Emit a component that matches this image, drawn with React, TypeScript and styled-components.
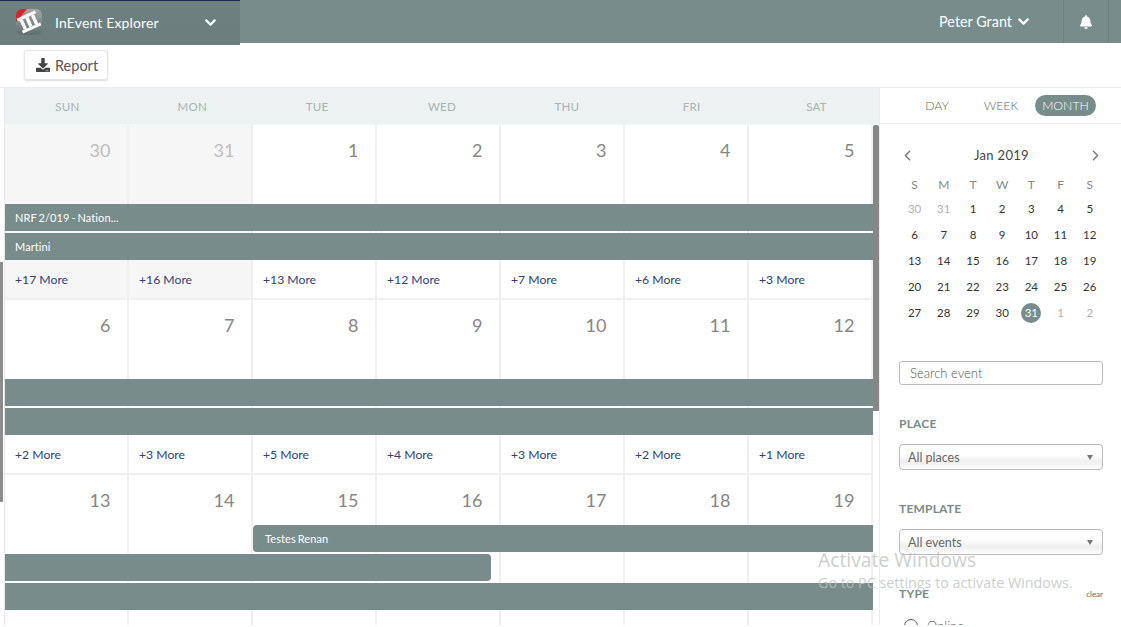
import React from 'react'
import styled, { createGlobalStyle } from 'styled-components'
import { ChevronDown, ChevronLeft, ChevronRight } from 'lucide-react'
import { FaBell, FaDownload } from 'react-icons/fa'

const SLATE = '#788c8c'

const GlobalStyle = createGlobalStyle`
  html, body {
    margin: 0;
    height: 100%;
    background: #fff;
    overflow: hidden;
  }
  * {
    box-sizing: border-box;
  }
  body {
    font-family: "Lato", "Liberation Sans", sans-serif;
  }
`

const Page = styled.div`
  position: relative;
  width: 1121px;
  height: 625px;
  overflow: hidden;
  background: #fff;
  display: flex;
  flex-direction: column;
`

const TopBar = styled.header`
  flex: none;
  height: 43px;
  background: ${SLATE};
  display: flex;
  align-items: flex-start;
  color: #fff;
  position: relative;
  z-index: 2;
`

const Brand = styled.div`
  width: 240px;
  height: 45px;
  background: linear-gradient(#6e8080, #6b7d7d);
  border-top: 1px solid #1c2c48;
  display: flex;
  align-items: center;
  padding: 0 0 2px 15px;
  font-size: 14px;
  letter-spacing: 0.15px;
`

const BrandName = styled.span`
  margin-left: 12px;
  flex: 1;
`

const BrandChevron = styled.span`
  display: flex;
  margin-right: 21px;
`

const UserArea = styled.div`
  margin-left: auto;
  height: 43px;
  display: flex;
  align-items: center;
  font-size: 14.4px;
`

const UserName = styled.span`
  display: flex;
  align-items: center;
  gap: 3px;
  margin-right: 31px;
`

const BellBox = styled.span`
  width: 46px;
  height: 43px;
  margin-right: 12px;
  display: flex;
  align-items: center;
  justify-content: center;
  border-left: 1px solid #6c8080;
  border-right: 1px solid #6c8080;
`

const Toolbar = styled.div`
  flex: none;
  height: 45px;
  padding: 7px 0 0 24px;
  border-bottom: 1px solid #ececec;
`

const ReportButton = styled.button`
  width: 84px;
  height: 30px;
  padding: 0 0 0 11px;
  background: #fff;
  border: 1px solid #e6e6e6;
  border-radius: 3px;
  box-shadow: 0 1px 2px rgba(0, 0, 0, 0.14);
  display: flex;
  align-items: center;
  gap: 5px;
  font-family: inherit;
  font-size: 14.5px;
  color: #555;
`

const Main = styled.div`
  flex: 1;
  min-height: 0;
  display: flex;
`

const Gutter = styled.div`
  flex: none;
  width: 5px;
  border-right: 1px solid #e6e6e6;
  padding-top: 174px;
`

const GutterThumb = styled.div`
  width: 3px;
  height: 240px;
  background: #8c8c8c;
`

const CalendarColumn = styled.div`
  flex: none;
  width: 874px;
  display: flex;
  flex-direction: column;
`

const WeekHeader = styled.div`
  flex: none;
  height: 37px;
  display: grid;
  grid-template-columns: repeat(7, 1fr);
  background: #ecf2f2;
  border-bottom: 1px solid #f4f6f6;
`

const WeekLabel = styled.div`
  padding-top: 12px;
  text-align: center;
  font-size: 11.5px;
  letter-spacing: 0.3px;
  color: #a8b2b2;
`

const CalendarBody = styled.div`
  flex: 1;
  display: flex;
  min-height: 0;
`

const Calendar = styled.section`
  flex: none;
  width: 868px;
  display: flex;
  flex-direction: column;
`

const Week = styled.div`
  flex: none;
  height: 175px;
  display: grid;
  grid-template-columns: repeat(7, 124px);
  grid-template-rows: 50px 29px 29px 29px 38px;
`

const Cell = styled.div<{ $col: number; $muted?: boolean }>`
  grid-column: ${p => p.$col};
  grid-row: 1 / -1;
  display: flex;
  flex-direction: column;
  background: ${p => (p.$muted ? '#f6f6f6' : '#fff')};
  border-right: 2px solid #f0f0f0;
  border-bottom: 2px solid #f0f0f0;
`

const DateNumber = styled.div<{ $muted?: boolean }>`
  padding: 14px 16.5px 0 0;
  text-align: right;
  font-size: 18px;
  line-height: 22px;
  color: ${p => (p.$muted ? '#bdbdbd' : '#868686')};
`

const MoreLink = styled.a`
  margin-top: auto;
  height: 37px;
  padding: 11px 0 0 10px;
  font-size: 12.2px;
  line-height: 16px;
  color: #2f4070;
`

const EventBar = styled.div<{ $from: number; $to: number; $slot: number; $start?: boolean; $end?: boolean }>`
  grid-column: ${p => p.$from} / ${p => p.$to};
  grid-row: ${p => p.$slot};
  height: 27px;
  margin-right: ${p => (p.$end ? '10px' : '0')};
  padding-left: ${p => (p.$start ? '12px' : '10px')};
  background: ${SLATE};
  border-radius: ${p => (p.$start ? '4px' : '0')} ${p => (p.$end ? '4px' : '0')} ${p => (p.$end ? '4px' : '0')} ${p => (p.$start ? '4px' : '0')};
  color: #fff;
  font-size: 11px;
  letter-spacing: 0.1px;
  word-spacing: -1px;
  line-height: 27px;
  z-index: 1;
`

const ScrollTrack = styled.div`
  flex: none;
  width: 6px;
`

const ScrollThumb = styled.div`
  width: 6px;
  height: 286px;
  border-radius: 2px 2px 0 0;
  background: #868686;
`

const Sidebar = styled.aside`
  flex: 1;
  min-width: 0;
  display: flex;
  flex-direction: column;
  border-left: 1px solid #ececec;
`

const ViewTabs = styled.div`
  flex: none;
  height: 36px;
  padding: 7px 0 0 25px;
  border-bottom: 1px solid #ececec;
  display: flex;
  align-items: flex-start;
`

const ViewTab = styled.span<{ $active?: boolean; $width: number }>`
  width: ${p => p.$width}px;
  height: 21px;
  line-height: 21px;
  text-align: center;
  font-size: 12.3px;
  font-weight: 300;
  border-radius: 11px;
  color: ${p => (p.$active ? '#fff' : '#666')};
  background: ${p => (p.$active ? SLATE : 'transparent')};
  &:last-child {
    margin-left: 2px;
  }
`

const MonthNav = styled.div`
  flex: none;
  margin-top: 21px;
  padding: 0 17px 0 19px;
  height: 20px;
  display: flex;
  align-items: center;
  justify-content: space-between;
  color: #777;
`

const MonthTitle = styled.span`
  font-size: 13px;
  letter-spacing: 0.3px;
  color: #444;
`

const MiniGrid = styled.div`
  flex: none;
  margin: 10px 0 0 20px;
  display: grid;
  grid-template-columns: repeat(7, 29.2px);
  grid-template-rows: 24px;
  grid-auto-rows: 26px;
  width: 205px;
`

const MiniHead = styled.div`
  font-size: 12px;
  line-height: 20px;
  text-align: center;
  color: #888;
`

const MiniDay = styled.div<{ $muted?: boolean; $today?: boolean }>`
  justify-self: center;
  width: 20px;
  height: 20px;
  line-height: 20px;
  text-align: center;
  font-size: 11.5px;
  border-radius: 50%;
  color: ${p => (p.$today ? '#fff' : p.$muted ? '#b0b0b0' : '#333')};
  background: ${p => (p.$today ? SLATE : 'transparent')};
`

const Filters = styled.div`
  flex: none;
  padding: 0 18px 0 19px;
  display: flex;
  flex-direction: column;
`

const SearchInput = styled.input`
  margin-top: 32px;
  width: 204px;
  height: 24px;
  padding: 0 10px;
  border: 1px solid #bbb;
  border-radius: 3px;
  font-family: inherit;
  font-size: 13px;
  font-weight: 300;
  color: #555;
  &::placeholder {
    color: #555;
    opacity: 1;
  }
`

const FieldLabel = styled.div<{ $gap: number }>`
  margin-top: ${p => p.$gap}px;
  height: 14px;
  line-height: 14px;
  font-size: 12px;
  font-weight: 700;
  letter-spacing: 0.2px;
  color: #7c8a8a;
  display: flex;
  justify-content: space-between;
`

const ClearLink = styled.span`
  font-size: 8px;
  font-weight: 400;
  letter-spacing: 0;
  color: #666;
`

const SelectBox = styled.div`
  margin-top: 13px;
  width: 204px;
  height: 26px;
  padding: 0 9px 0 8px;
  border: 1px solid #bbb;
  border-radius: 4px;
  background: linear-gradient(#fff, #fff 40%, #eee 70%, #fff);
  display: flex;
  align-items: center;
  justify-content: space-between;
  font-size: 12.5px;
  color: #666;
`

const SelectArrow = styled.span`
  width: 0;
  height: 0;
  border-left: 3.5px solid transparent;
  border-right: 3.5px solid transparent;
  border-top: 5px solid #777;
`

const RadioRow = styled.div`
  margin-top: 17px;
  padding-left: 5px;
  display: flex;
  align-items: center;
  gap: 9px;
  font-size: 13px;
  font-weight: 300;
  color: #555;
`

const RadioDot = styled.span`
  width: 14px;
  height: 14px;
  border: 1px solid #555;
  border-radius: 50%;
`

const Watermark = styled.div`
  position: absolute;
  left: 818px;
  top: 547px;
  z-index: 3;
  font-family: "Open Sans", "Noto Sans", sans-serif;
  color: rgba(190, 194, 194, 0.8);
  pointer-events: none;
`

const WatermarkTitle = styled.div`
  font-size: 19.3px;
  line-height: 26px;
`

const WatermarkText = styled.div`
  font-size: 14.3px;
  line-height: 20px;
`

const AppLogo = () => (
  <svg width="28" height="28" viewBox="0 0 28 28">
    <defs>
      <linearGradient id="logoBg" x1="0" y1="0" x2="0" y2="1">
        <stop offset="0" stopColor="#a4a8a8" />
        <stop offset="1" stopColor="#5f6e6e" />
      </linearGradient>
    </defs>
    <rect x="1" y="1" width="26" height="26" rx="6" fill="url(#logoBg)" />
    <path d="M7 1 H12 L1 14 V7 A6 6 0 0 1 7 1 Z" fill="#d8232a" />
    <g transform="rotate(-24 14 14)" fill="#fff">
      <rect x="4" y="6" width="20" height="3" />
      <rect x="4" y="19" width="20" height="3" />
      <rect x="6" y="9" width="3.4" height="10" />
      <rect x="12.2" y="9" width="3.4" height="10" />
      <rect x="18.4" y="9" width="3.4" height="10" />
    </g>
  </svg>
)

const weekNames = ['SUN', 'MON', 'TUE', 'WED', 'THU', 'FRI', 'SAT']
const miniNames = ['S', 'M', 'T', 'W', 'T', 'F', 'S']

type Day = { n: number; more?: number; muted?: boolean }
type Bar = { from: number; to: number; slot: number; label?: string; start?: boolean; end?: boolean }

const weeks: { days: Day[]; bars: Bar[] }[] = [
  {
    days: [
      { n: 30, more: 17, muted: true },
      { n: 31, more: 16, muted: true },
      { n: 1, more: 13 },
      { n: 2, more: 12 },
      { n: 3, more: 7 },
      { n: 4, more: 6 },
      { n: 5, more: 3 },
    ],
    bars: [
      { from: 1, to: 8, slot: 3, label: 'NRF 2/019 - Nation...' },
      { from: 1, to: 8, slot: 4, label: 'Martini' },
    ],
  },
  {
    days: [
      { n: 6, more: 2 },
      { n: 7, more: 3 },
      { n: 8, more: 5 },
      { n: 9, more: 4 },
      { n: 10, more: 3 },
      { n: 11, more: 2 },
      { n: 12, more: 1 },
    ],
    bars: [
      { from: 1, to: 8, slot: 3 },
      { from: 1, to: 8, slot: 4 },
    ],
  },
  {
    days: [{ n: 13 }, { n: 14 }, { n: 15 }, { n: 16 }, { n: 17 }, { n: 18 }, { n: 19 }],
    bars: [
      { from: 3, to: 8, slot: 2, label: 'Testes Renan', start: true },
      { from: 1, to: 5, slot: 3, end: true },
      { from: 1, to: 8, slot: 4 },
    ],
  },
]

const miniDays: { n: number; muted?: boolean; today?: boolean }[] = [
  { n: 30, muted: true },
  { n: 31, muted: true },
  ...Array.from({ length: 30 }, (_, i) => ({ n: i + 1 })),
  { n: 31, today: true },
  { n: 1, muted: true },
  { n: 2, muted: true },
]

const App = () => {
  return (
    <Page>
      <GlobalStyle />
      <TopBar>
        <Brand>
          <AppLogo />
          <BrandName>InEvent Explorer</BrandName>
          <BrandChevron>
            <ChevronDown size={17} strokeWidth={3} />
          </BrandChevron>
        </Brand>
        <UserArea>
          <UserName>
            Peter Grant <ChevronDown size={17} strokeWidth={3} />
          </UserName>
          <BellBox>
            <FaBell size={14} />
          </BellBox>
        </UserArea>
      </TopBar>
      <Toolbar>
        <ReportButton>
          <FaDownload size={14} color="#444" /> Report
        </ReportButton>
      </Toolbar>
      <Main>
        <Gutter>
          <GutterThumb />
        </Gutter>
        <CalendarColumn>
          <WeekHeader>
            {weekNames.map(name => (
              <WeekLabel key={name}>{name}</WeekLabel>
            ))}
          </WeekHeader>
          <CalendarBody>
            <Calendar>
              {weeks.map((week, w) => (
                <Week key={w}>
                  {week.days.map((day, i) => (
                    <Cell key={i} $col={i + 1} $muted={day.muted}>
                      <DateNumber $muted={day.muted}>{day.n}</DateNumber>
                      {day.more && <MoreLink>+{day.more} More</MoreLink>}
                    </Cell>
                  ))}
                  {week.bars.map((bar, i) => (
                    <EventBar key={i} $from={bar.from} $to={bar.to} $slot={bar.slot} $start={bar.start} $end={bar.end}>
                      {bar.label}
                    </EventBar>
                  ))}
                </Week>
              ))}
            </Calendar>
            <ScrollTrack>
              <ScrollThumb />
            </ScrollTrack>
          </CalendarBody>
        </CalendarColumn>
        <Sidebar>
          <ViewTabs>
            <ViewTab $width={64}>DAY</ViewTab>
            <ViewTab $width={64}>WEEK</ViewTab>
            <ViewTab $width={61} $active>MONTH</ViewTab>
          </ViewTabs>
          <MonthNav>
            <ChevronLeft size={17} strokeWidth={2} />
            <MonthTitle>Jan 2019</MonthTitle>
            <ChevronRight size={17} strokeWidth={2} />
          </MonthNav>
          <MiniGrid>
            {miniNames.map((name, i) => (
              <MiniHead key={i}>{name}</MiniHead>
            ))}
            {miniDays.map((day, i) => (
              <MiniDay key={i} $muted={day.muted} $today={day.today}>
                {day.n}
              </MiniDay>
            ))}
          </MiniGrid>
          <Filters>
            <SearchInput placeholder="Search event" />
            <FieldLabel $gap={32}>PLACE</FieldLabel>
            <SelectBox>
              All places <SelectArrow />
            </SelectBox>
            <FieldLabel $gap={32}>TEMPLATE</FieldLabel>
            <SelectBox>
              All events <SelectArrow />
            </SelectBox>
            <FieldLabel $gap={32}>
              TYPE <ClearLink>clear</ClearLink>
            </FieldLabel>
            <RadioRow>
              <RadioDot /> Online
            </RadioRow>
          </Filters>
        </Sidebar>
      </Main>
      <Watermark>
        <WatermarkTitle>Activate Windows</WatermarkTitle>
        <WatermarkText>Go to PC settings to activate Windows.</WatermarkText>
      </Watermark>
    </Page>
  )
}

export default App
